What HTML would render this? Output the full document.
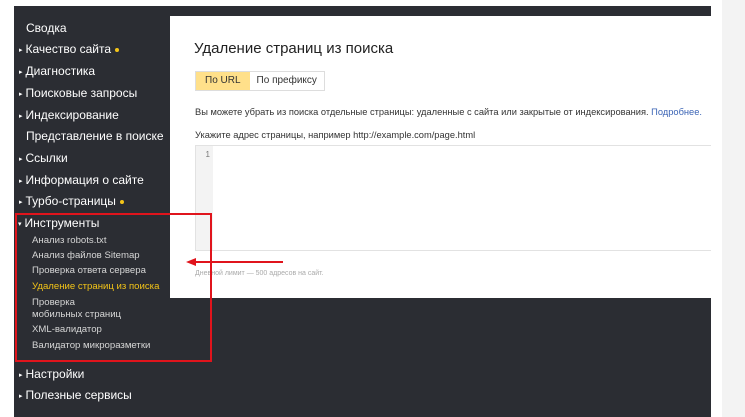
<!DOCTYPE html>
<html><head><meta charset="utf-8"><style>
*{margin:0;padding:0;box-sizing:border-box}
body{width:745px;height:417px;background:#fff;position:relative;overflow:hidden;font-family:"Liberation Sans",Arial,sans-serif}
.dark{position:absolute;left:14px;top:6px;width:697px;height:411px;background:#2b2d33}
.right{position:absolute;left:722px;top:0;width:23px;height:417px;background:#f3f3f3}
.main{position:absolute;left:170px;top:16px;width:541px;height:282px;background:#fff}
.t{position:absolute;color:#fff;font-size:12px;white-space:nowrap}
.t .a{font-size:7px;margin-right:3px;position:relative;top:-1px}
.s{position:absolute;color:#d6d6d6;font-size:9.6px;left:32px;white-space:nowrap}
.dot{display:inline-block;width:4px;height:4px;border-radius:50%;background:#f5c518;margin-left:4px;vertical-align:middle}
</style></head><body>
<div class="dark"></div>
<div class="right"></div>
<div class="t" style="left:26px;top:21px">Сводка</div>
<div class="t" style="left:19px;top:42px"><span class="a">▸</span>Качество сайта<span class="dot"></span></div>
<div class="t" style="left:19px;top:64px"><span class="a">▸</span>Диагностика</div>
<div class="t" style="left:19px;top:86px"><span class="a">▸</span>Поисковые запросы</div>
<div class="t" style="left:19px;top:108px"><span class="a">▸</span>Индексирование</div>
<div class="t" style="left:26px;top:129px">Представление в поиске</div>
<div class="t" style="left:19px;top:151px"><span class="a">▸</span>Ссылки</div>
<div class="t" style="left:19px;top:173px"><span class="a">▸</span>Информация о сайте</div>
<div class="t" style="left:19px;top:194px"><span class="a">▸</span>Турбо-страницы<span class="dot"></span></div>
<div class="t" style="left:18px;top:216px"><span class="a">▾</span>Инструменты</div>
<div class="s" style="top:235px">Анализ robots.txt</div>
<div class="s" style="top:250px">Анализ файлов Sitemap</div>
<div class="s" style="top:265px">Проверка ответа сервера</div>
<div class="s" style="top:281px;color:#f2c318">Удаление страниц из поиска</div>
<div class="s" style="top:297px;line-height:12px">Проверка<br>мобильных страниц</div>
<div class="s" style="top:324px">XML-валидатор</div>
<div class="s" style="top:340px">Валидатор микроразметки</div>
<div class="t" style="left:19px;top:367px"><span class="a">▸</span>Настройки</div>
<div class="t" style="left:19px;top:388px"><span class="a">▸</span>Полезные сервисы</div>
<div class="main">
 <div style="position:absolute;left:24px;top:24px;font-size:15px;color:#222">Удаление страниц из поиска</div>
 <div style="position:absolute;left:25px;top:55px;height:20px;display:flex;border:1px solid #ddd;font-size:10px;white-space:nowrap">
  <div style="background:#ffe08a;padding:0 9px;line-height:18px;color:#333">По URL</div>
  <div style="padding:0 7px;line-height:18px;color:#333">По префиксу</div>
 </div>
 <div style="position:absolute;left:25px;top:91px;font-size:9.3px;color:#333;white-space:nowrap">Вы можете убрать из поиска отдельные страницы: удаленные с сайта или закрытые от индексирования. <span style="color:#3b64b5">Подробнее.</span></div>
 <div style="position:absolute;left:25px;top:114px;font-size:9.3px;color:#333;white-space:nowrap">Укажите адрес страницы, например http://example.com/page.html</div>
 <div style="position:absolute;left:25px;top:129px;width:516px;height:106px;border:1px solid #e2e2e2;border-right:none;background:#fff">
  <div style="position:absolute;left:0;top:0;width:17px;height:104px;background:#f3f3f3;font-size:8px;color:#777;text-align:right;padding:4px 3px 0 0">1</div>
 </div>
 <div style="position:absolute;left:25px;top:254px;font-size:7px;color:#aaa">Дневной лимит — 500 адресов на сайт.</div>
</div>
<div style="position:absolute;left:15px;top:213px;width:197px;height:149px;border:2px solid #e0141c"></div>
<div style="position:absolute;left:195px;top:261px;width:88px;height:2px;background:#e0141c"></div>
<div style="position:absolute;left:186px;top:258px;width:0;height:0;border-top:4px solid transparent;border-bottom:4px solid transparent;border-right:10px solid #e0141c"></div>
</body></html>
